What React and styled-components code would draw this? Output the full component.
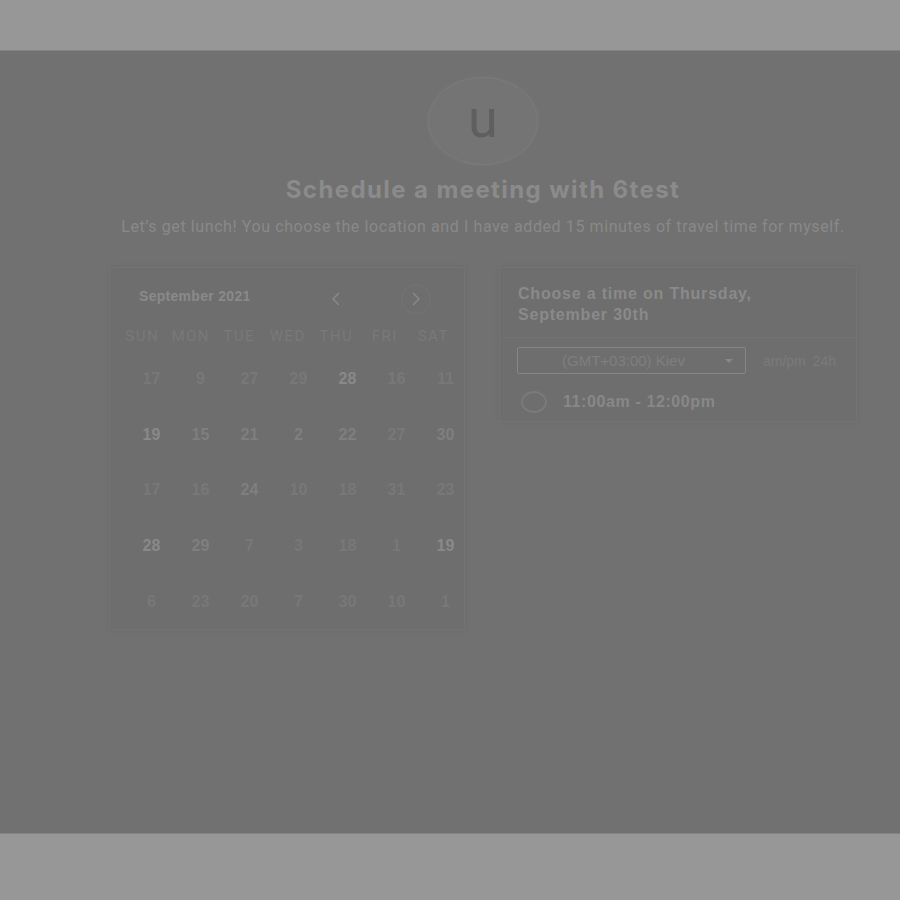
import styled, { createGlobalStyle } from 'styled-components';

const GlobalStyle = createGlobalStyle`
    html, body {
        margin: 0;
        padding: 0;
        background: #717171;
    }
    * {
        box-sizing: border-box;
    }
`;

const Page = styled.div`
    width: 900px;
    height: 900px;
    display: flex;
    flex-direction: column;
    font-family: "Liberation Sans", Arial, sans-serif;
`;

const Band = styled.div`
    height: ${(p) => p.$h}px;
    background: #979797;
    flex-shrink: 0;
`;

const Main = styled.main`
    flex: 1;
    background: #717171;
    border-top: 1px solid #838383;
    border-bottom: 1px solid #838383;
`;

const Wrap = styled.div`
    width: 748px;
    margin-left: 109px;
    display: flex;
    flex-direction: column;
    align-items: center;
`;

const Avatar = styled.div`
    width: 110px;
    height: 88px;
    margin-top: 26px;
    border-radius: 50%;
    background: #747474;
    border: 1px solid #7b7b7b;
    box-shadow: 0 0 4px rgba(255, 255, 255, 0.05);
    display: flex;
    align-items: center;
    justify-content: center;
    font-family: Roboto, sans-serif;
    font-size: 54px;
    line-height: 1;
    color: #5f5f5f;
    padding-bottom: 5px;
`;

const Title = styled.h1`
    margin: 11px 0 0;
    font-family: Inter, "Liberation Sans", sans-serif;
    font-size: 24px;
    line-height: 28px;
    font-weight: 700;
    letter-spacing: 1.4px;
    color: #8b8b8b;
`;

const Subtitle = styled.p`
    margin: 13px 0 0;
    font-family: Roboto, sans-serif;
    font-size: 16px;
    line-height: 20px;
    letter-spacing: 0.6px;
    color: #898989;
    white-space: nowrap;
`;

const Columns = styled.div`
    align-self: stretch;
    margin-top: 30px;
    display: flex;
    justify-content: space-between;
    align-items: flex-start;
`;

const Card = styled.section`
    background: #6e6e6e;
    border: 1px solid #737373;
    box-shadow: 0 0 6px rgba(0, 0, 0, 0.06);
`;

const CalendarCard = styled(Card)`
    width: 356px;
    height: 363px;
    padding-top: 16px;
`;

const CalHeader = styled.div`
    display: flex;
    align-items: center;
    height: 30px;
    padding: 0 33px 0 29px;
`;

const Month = styled.div`
    font-size: 14px;
    font-weight: 700;
    letter-spacing: 0.3px;
    color: #8a8a8a;
    margin-top: -6px;
`;

const Nav = styled.div`
    margin-left: auto;
    display: flex;
    gap: 50px;
`;

const NavButton = styled.button`
    width: 30px;
    height: 30px;
    padding: 0;
    border-radius: 50%;
    border: 1px solid ${(p) => (p.$hover ? '#747474' : 'transparent')};
    background: transparent;
    display: flex;
    align-items: center;
    justify-content: center;
    color: #888;
`;

const WeekRow = styled.div`
    display: grid;
    grid-template-columns: repeat(7, 48.5px);
    margin-top: 12px;
    padding-left: 8px;
    height: 20px;
    align-items: center;
`;

const WeekDay = styled.div`
    text-align: center;
    font-family: Roboto, sans-serif;
    font-size: 15px;
    letter-spacing: 1.5px;
    color: #797979;
`;

const DaysGrid = styled.div`
    display: grid;
    grid-template-columns: repeat(7, 49px);
    grid-auto-rows: 55.8px;
    margin-top: 5px;
    padding-left: 17px;
`;

const Day = styled.div`
    display: flex;
    align-items: center;
    justify-content: center;
    font-size: 16px;
    font-weight: 700;
    color: ${(p) => (p.$tone === 2 ? '#898989' : p.$tone === 1 ? '#7f7f7f' : '#787878')};
`;

const TimeCard = styled(Card)`
    width: 358px;
    height: 155px;
    padding-top: 15px;
`;

const TimeTitle = styled.h2`
    margin: 0;
    padding: 0 18px;
    font-size: 16px;
    line-height: 21px;
    font-weight: 700;
    letter-spacing: 0.8px;
    color: #8a8a8a;
`;

const Divider = styled.div`
    height: 1px;
    background: #727272;
    margin-top: 12px;
`;

const ZoneRow = styled.div`
    display: flex;
    align-items: center;
    gap: 17px;
    margin-top: 9px;
    padding-left: 17px;
`;

const Select = styled.div`
    width: 229px;
    height: 27px;
    border: 1px solid #868686;
    border-radius: 2px;
    display: flex;
    align-items: center;
    padding: 0 12px 0 44px;
    font-size: 15px;
    color: #7f7f7f;
`;

const Caret = styled.span`
    margin-left: auto;
    width: 0;
    height: 0;
    border-left: 4px solid transparent;
    border-right: 4px solid transparent;
    border-top: 4px solid #878787;
`;

const Format = styled.div`
    font-size: 14px;
    word-spacing: 3px;
    color: #7b7b7b;
`;

const Slot = styled.div`
    display: flex;
    align-items: center;
    gap: 16px;
    margin-top: 17px;
    padding-left: 21px;
`;

const Radio = styled.span`
    width: 26px;
    height: 22px;
    border-radius: 50%;
    border: 2px solid #7a7a7a;
`;

const SlotText = styled.div`
    font-size: 16px;
    font-weight: 700;
    letter-spacing: 0.6px;
    color: #888;
`;

const weekDays = ['SUN', 'MON', 'TUE', 'WED', 'THU', 'FRI', 'SAT'];

// tone: 0 dim, 1 mid, 2 bright
const days = [
    [17, 0], [9, 0], [27, 0], [29, 0], [28, 2], [16, 0], [11, 0],
    [19, 2], [15, 1], [21, 1], [2, 1], [22, 1], [27, 0], [30, 1],
    [17, 0], [16, 0], [24, 1], [10, 0], [18, 0], [31, 0], [23, 0],
    [28, 2], [29, 1], [7, 0], [3, 0], [18, 0], [1, 0], [19, 2],
    [6, 0], [23, 0], [20, 0], [7, 0], [30, 0], [10, 0], [1, 0],
];

function Chevron({ dir }) {
    return (
        <svg width="12" height="14" viewBox="0 0 12 14" fill="none">
            <path
                d={dir === 'left' ? 'M8.5 1.5 L3 7 L8.5 12.5' : 'M3.5 1.5 L9 7 L3.5 12.5'}
                stroke="#888"
                strokeWidth="1.6"
                strokeLinecap="round"
                strokeLinejoin="round"
            />
        </svg>
    );
}

export default function App() {
    return (
        <>
            <GlobalStyle />
            <Page>
                <Band $h={50} />
                <Main>
                    <Wrap>
                        <Avatar>u</Avatar>
                        <Title>Schedule a meeting with 6test</Title>
                        <Subtitle>
                            Let’s get lunch! You choose the location and I have added 15 minutes of travel time for myself.
                        </Subtitle>
                        <Columns>
                            <CalendarCard>
                                <CalHeader>
                                    <Month>September 2021</Month>
                                    <Nav>
                                        <NavButton><Chevron dir="left" /></NavButton>
                                        <NavButton $hover><Chevron dir="right" /></NavButton>
                                    </Nav>
                                </CalHeader>
                                <WeekRow>
                                    {weekDays.map((d) => (
                                        <WeekDay key={d}>{d}</WeekDay>
                                    ))}
                                </WeekRow>
                                <DaysGrid>
                                    {days.map(([n, tone], i) => (
                                        <Day key={i} $tone={tone}>{n}</Day>
                                    ))}
                                </DaysGrid>
                            </CalendarCard>
                            <TimeCard>
                                <TimeTitle>
                                    Choose a time on Thursday,
                                    <br />
                                    September 30th
                                </TimeTitle>
                                <Divider />
                                <ZoneRow>
                                    <Select>
                                        (GMT+03:00) Kiev
                                        <Caret />
                                    </Select>
                                    <Format>am/pm 24h</Format>
                                </ZoneRow>
                                <Slot>
                                    <Radio />
                                    <SlotText>11:00am - 12:00pm</SlotText>
                                </Slot>
                            </TimeCard>
                        </Columns>
                    </Wrap>
                </Main>
                <Band $h={66} />
            </Page>
        </>
    );
}
